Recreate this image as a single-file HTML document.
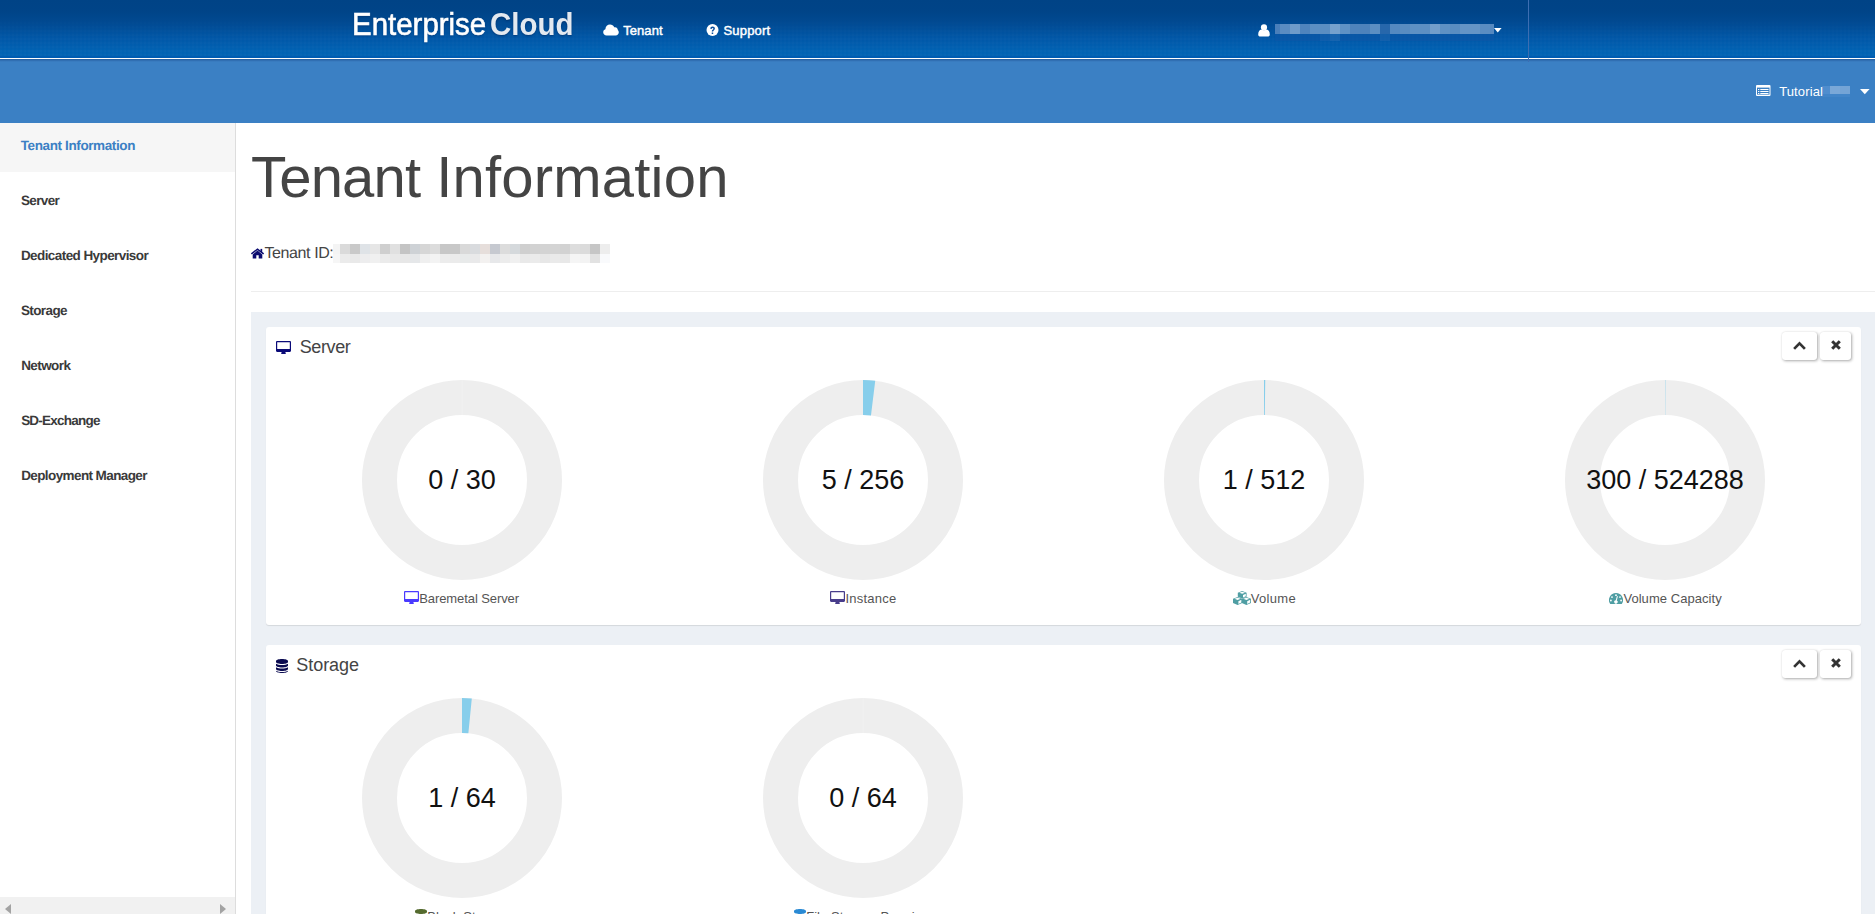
<!DOCTYPE html>
<html lang="en">
<head>
<meta charset="utf-8">
<title>Tenant Information</title>
<style>
*{box-sizing:border-box;margin:0;padding:0}
html,body{width:1875px;height:914px;overflow:hidden;background:#fff}
body{font-family:"Liberation Sans",sans-serif;color:#333;position:relative}
.abs{position:absolute}
.t{position:absolute;white-space:nowrap;line-height:1}
#top{position:absolute;left:0;top:0;width:1875px;height:58px;background:linear-gradient(#004386 0,#004488 12px,#00488f 20px,#004e99 28px,#0055a4 36px,#005cad 44px,#0062b3 51px,#0064b5 55px,#005db2 56.500px,#005bb0 58px)}
#top:after{content:"";position:absolute;left:0;top:14px;width:100%;height:42px;background-image:linear-gradient(90deg,rgba(255,255,255,.011) 50%,transparent 50%),linear-gradient(rgba(255,255,255,.011) 50%,transparent 50%);background-size:4px 4px;-webkit-mask-image:linear-gradient(transparent,#000 60%);mask-image:linear-gradient(transparent,#000 60%)}
#wl{position:absolute;left:0;top:58px;width:1875px;height:1px;background:#fff}
#sub{position:absolute;left:0;top:59px;width:1875px;height:64px;background:#3b80c4}
#sub:before{content:"";position:absolute;left:0;top:0;width:100%;height:3px;background:linear-gradient(#265f9f 0,#2c68aa 1px,#3676ba 2px,#3b80c4 3px)}
#vsep{position:absolute;left:1528px;top:0;width:1px;height:62px;background:#3d6eb2}
#side{position:absolute;left:0;top:123px;width:236px;height:791px;background:#fff;border-right:1px solid #ddd}
#side .act{position:absolute;left:0;top:0;width:235px;height:49px;background:#f6f6f6}
#side .it{position:absolute;font-size:13.500px;text-rendering:geometricPrecision;font-weight:bold;color:#3a3a3a;white-space:nowrap;line-height:16px}
#side .it.a{color:#3b80c4}
#sb{position:absolute;left:0;top:897px;width:235px;height:17px;background:#f1f1f1}
h1 span{position:absolute;top:0}
h1{position:absolute;font-size:58px;font-weight:normal;color:#444;line-height:64px;white-space:nowrap}
#hr{position:absolute;left:251px;top:291px;width:1624px;height:1px;background:#eee}
#wrap{position:absolute;left:251px;top:312px;width:1624px;height:602px;background:#ecf0f5}
.box{position:absolute;left:15px;width:1595px;height:298px;background:#fff;border-radius:3px;box-shadow:0 1px 1px rgba(0,0,0,.1)}
.bt{position:absolute;top:5px;height:28px;background:#fff;border-radius:3px;box-shadow:1px 1px 3px rgba(0,0,0,.33),0 0 1px rgba(0,0,0,.12)}
.ttl{position:absolute;font-size:18px;color:#444;line-height:20px;white-space:nowrap}
.dn{position:absolute;width:200px;height:200px;top:53px}
.dn text{font-family:"Liberation Sans",sans-serif;font-size:27px;fill:#111}
.lb{position:absolute;top:264px;font-size:13px;color:#555;line-height:16px;white-space:nowrap}
.lb svg{margin:-4px 0;vertical-align:3px}
</style>
</head>
<body>

<div id="top"></div>
<div id="wl"></div>
<div id="sub"></div>
<div id="vsep"></div>
<div class="t" id="logo" style="left:352px;top:7px;font-size:31px;line-height:36px;color:#fff;transform-origin:0 0;transform:scaleX(0.95);text-shadow:0 1px 2px rgba(0,30,80,.5)"><span style="-webkit-text-stroke:.6px #fff">Enterprise</span><span style="font-weight:bold;color:#e3e9f0;margin-left:4px">Cloud</span></div>
<svg class="abs" style="left:603px;top:24px" width="16" height="12" viewBox="0 0 16 12"><path fill="#fff" d="M3.600 11.400C1.700 11.400 .2 10 .2 8.200c0-1.400.9-2.600 2.200-3C2.500 2.600 4.500 .6 7 .6c1.900 0 3.500 1.100 4.200 2.700.3-.1.600-.15.900-.15 1.500 0 2.700 1.200 2.700 2.700v.2c.6.5 1 1.300 1 2.200 0 1.700-1.400 3.150-3.100 3.150z"/></svg>
<div class="t" id="nav1" style="left:623.17px;top:23px;font-size:13px;-webkit-text-stroke:.45px #fff;color:#fff;line-height:15px;letter-spacing:0.070px;">Tenant</div>
<svg class="abs" style="left:706px;top:24px" width="13" height="13" viewBox="0 0 13 13"><circle cx="6.500" cy="6.100" r="6" fill="#fff"/><path fill="#0a4f9e" d="M5.700 8.600h1.500v1.500H5.700zM4.300 4.700c0-1.300 1-2.100 2.300-2.100 1.300 0 2.300.8 2.300 2 0 .9-.5 1.400-1.100 1.800-.5.300-.6.500-.6 1.100H5.800c0-1 .3-1.400.9-1.800.5-.3.700-.6.700-1 0-.4-.3-.7-.8-.7s-.9.3-.9.900z"/></svg>
<div class="t" id="nav2" style="left:723.51px;top:23px;font-size:13px;-webkit-text-stroke:.45px #fff;color:#fff;line-height:15px;letter-spacing:0.174px;">Support</div>
<svg class="abs" style="left:1258px;top:24px" width="12" height="13" viewBox="0 0 12 13"><circle cx="6" cy="3.4" r="3.1" fill="#fff"/><path fill="#fff" d="M.2 10.400C.2 7.600 1.600 5.600 3.200 5.500c.8.500 1.700.8 2.800.8s2-.3 2.800-.8c1.600.1 3 2.100 3 4.900 0 1.300-.9 2.200-2.200 2.200H2.400C1.100 12.600.2 11.700.2 10.400z"/></svg>
<div id="umos" class="abs" style="left:1275px;top:24px;width:220px;height:17px"><i style="position:absolute;left:0px;top:0;width:5px;height:10px;background:#4a7fba"></i><i style="position:absolute;left:0px;top:10px;width:5px;height:7px;background:#0b57a7;opacity:.7"></i><i style="position:absolute;left:5px;top:0;width:10px;height:10px;background:#5a8cc2"></i><i style="position:absolute;left:5px;top:10px;width:10px;height:7px;background:#0b57a7;opacity:.7"></i><i style="position:absolute;left:15px;top:0;width:10px;height:10px;background:#6e9bca"></i><i style="position:absolute;left:15px;top:10px;width:10px;height:7px;background:#0b57a7;opacity:.7"></i><i style="position:absolute;left:25px;top:0;width:10px;height:10px;background:#4f84bd"></i><i style="position:absolute;left:25px;top:10px;width:10px;height:7px;background:#0b57a7;opacity:.7"></i><i style="position:absolute;left:35px;top:0;width:10px;height:10px;background:#5c8fc3"></i><i style="position:absolute;left:35px;top:10px;width:10px;height:7px;background:#0b57a7;opacity:.7"></i><i style="position:absolute;left:45px;top:0;width:10px;height:10px;background:#5b8ec2"></i><i style="position:absolute;left:45px;top:10px;width:10px;height:7px;background:#1560ac;opacity:.7"></i><i style="position:absolute;left:55px;top:0;width:10px;height:10px;background:#76a1cd"></i><i style="position:absolute;left:55px;top:10px;width:10px;height:7px;background:#1f68b0;opacity:.7"></i><i style="position:absolute;left:65px;top:0;width:10px;height:10px;background:#5f92c5"></i><i style="position:absolute;left:65px;top:10px;width:10px;height:7px;background:#0b57a7;opacity:.7"></i><i style="position:absolute;left:75px;top:0;width:10px;height:10px;background:#4e83bc"></i><i style="position:absolute;left:75px;top:10px;width:10px;height:7px;background:#0b57a7;opacity:.7"></i><i style="position:absolute;left:85px;top:0;width:10px;height:10px;background:#4d82bb"></i><i style="position:absolute;left:85px;top:10px;width:10px;height:7px;background:#0b57a7;opacity:.7"></i><i style="position:absolute;left:95px;top:0;width:10px;height:10px;background:#5b8ec2"></i><i style="position:absolute;left:95px;top:10px;width:10px;height:7px;background:#0b57a7;opacity:.7"></i><i style="position:absolute;left:105px;top:0;width:10px;height:10px;background:#2767ab"></i><i style="position:absolute;left:105px;top:10px;width:10px;height:7px;background:#1a62ad;opacity:.7"></i><i style="position:absolute;left:115px;top:0;width:10px;height:10px;background:#5589c0"></i><i style="position:absolute;left:115px;top:10px;width:10px;height:7px;background:#0b57a7;opacity:.7"></i><i style="position:absolute;left:125px;top:0;width:10px;height:10px;background:#588cc1"></i><i style="position:absolute;left:125px;top:10px;width:10px;height:7px;background:#0b57a7;opacity:.7"></i><i style="position:absolute;left:135px;top:0;width:10px;height:10px;background:#5e91c4"></i><i style="position:absolute;left:135px;top:10px;width:10px;height:7px;background:#0b57a7;opacity:.7"></i><i style="position:absolute;left:145px;top:0;width:10px;height:10px;background:#5c8fc3"></i><i style="position:absolute;left:145px;top:10px;width:10px;height:7px;background:#0b57a7;opacity:.7"></i><i style="position:absolute;left:155px;top:0;width:10px;height:10px;background:#729ecb"></i><i style="position:absolute;left:155px;top:10px;width:10px;height:7px;background:#0b57a7;opacity:.7"></i><i style="position:absolute;left:165px;top:0;width:10px;height:10px;background:#5e91c4"></i><i style="position:absolute;left:165px;top:10px;width:10px;height:7px;background:#0b57a7;opacity:.7"></i><i style="position:absolute;left:175px;top:0;width:10px;height:10px;background:#598dc1"></i><i style="position:absolute;left:175px;top:10px;width:10px;height:7px;background:#0b57a7;opacity:.7"></i><i style="position:absolute;left:185px;top:0;width:10px;height:10px;background:#6494c6"></i><i style="position:absolute;left:185px;top:10px;width:10px;height:7px;background:#0b57a7;opacity:.7"></i><i style="position:absolute;left:195px;top:0;width:10px;height:10px;background:#6595c6"></i><i style="position:absolute;left:195px;top:10px;width:10px;height:7px;background:#0b57a7;opacity:.7"></i><i style="position:absolute;left:205px;top:0;width:10px;height:10px;background:#5a8dc2"></i><i style="position:absolute;left:205px;top:10px;width:10px;height:7px;background:#0b57a7;opacity:.7"></i><i style="position:absolute;left:215px;top:0;width:4px;height:10px;background:#5589c0"></i><i style="position:absolute;left:215px;top:10px;width:4px;height:7px;background:#0b57a7;opacity:.7"></i></div>
<svg class="abs" style="left:1494px;top:28px" width="8" height="5" viewBox="0 0 8 5"><path fill="#fff" d="M0 0h7.600L3.800 4.600z"/></svg>
<svg class="abs" style="left:1756px;top:85px" width="15" height="11" viewBox="0 0 15 11"><rect x="0" y="0" width="14.500" height="11" rx="1" fill="#fff"/><rect x="1" y="2.600" width="12.500" height="7" fill="#3b80c4"/><path fill="#fff" d="M2 4h1.300v1H2zM4.300 4h8.200v1H4.300zM2 6h1.300v1H2zM4.300 6h8.200v1H4.300zM2 8h1.300v1H2zM4.300 8h8.200v1H4.300z"/></svg>
<div id="tmos" class="abs" style="left:1822px;top:86px;width:28px;height:11px"><i style="position:absolute;left:0;top:0;width:8px;height:8px;background:#4f8dce"></i><i style="position:absolute;left:8px;top:0;width:10px;height:8px;background:#7aa8d8"></i><i style="position:absolute;left:18px;top:0;width:10px;height:8px;background:#74a4d6"></i><i style="position:absolute;left:0;top:8px;width:28px;height:3px;background:#4285c8"></i></div>
<div class="t" id="tut" style="left:1779.15px;top:84px;font-size:13px;color:#fff;line-height:15px;letter-spacing:0.139px;">Tutorial</div>
<svg class="abs" style="left:1860px;top:89px" width="10" height="6" viewBox="0 0 10 6"><path fill="#fff" d="M0 0h9.600L4.800 5.200z"/></svg>

<div id="side"><div class="act"></div><div class="it a" id="s0" style="left:20.78px;top:15.3px;letter-spacing:-0.388px;">Tenant Information</div><div class="it" id="s1" style="left:20.88px;top:70.3px;letter-spacing:-0.617px;">Server</div><div class="it" id="s2" style="left:20.95px;top:125.3px;letter-spacing:-0.580px;">Dedicated Hypervisor</div><div class="it" id="s3" style="left:20.88px;top:180.3px;letter-spacing:-0.601px;">Storage</div><div class="it" id="s4" style="left:21.15px;top:235.3px;letter-spacing:-0.585px;">Network</div><div class="it" id="s5" style="left:21.13px;top:290.3px;letter-spacing:-0.764px;">SD-Exchange</div><div class="it" id="s6" style="left:21.15px;top:345.3px;letter-spacing:-0.598px;">Deployment Manager</div></div><div id="sb"><svg class="abs" style="left:5px;top:7px" width="6" height="10" viewBox="0 0 6 10"><path fill="#a3a3a3" d="M6 0v10L0 5z"/></svg><svg class="abs" style="left:220px;top:7px" width="6" height="10" viewBox="0 0 6 10"><path fill="#a3a3a3" d="M0 0v10l6-5z"/></svg></div>

<h1 style="left:0;top:145px;width:800px;height:64px"><span id="h1a" style="left:251.0px;letter-spacing:-0.805px;">Tenant</span> <span id="h1b" style="left:436.15px;letter-spacing:0.215px;">Information</span></h1>
<svg class="abs" id="home" style="left:251px;top:247.500px" width="13" height="11" viewBox="0 0 13 11"><path fill="#0b0b70" d="M6.500 2.600 11.300 6.500V10.500H7.700V7.300H5.300V10.500H1.700V6.500z"/><path fill="none" stroke="#0b0b70" stroke-width="1.500" d="M.4 6 6.500 1.100 12.600 6"/><rect x="9.500" y=".9" width="1.700" height="3.200" fill="#0b0b70"/></svg>
<div class="t" id="tid" style="left:264.48px;top:245px;font-size:16px;text-rendering:geometricPrecision;color:#444;line-height:17px;letter-spacing:-0.398px;">Tenant ID:</div>
<div id="idmos" class="abs" style="left:333px;top:244px;width:277px;height:19px"><i style="position:absolute;left:0px;top:0;width:7px;height:10px;background:#f4f4f4"></i><i style="position:absolute;left:0px;top:10px;width:7px;height:9px;background:#f6f6f6"></i><i style="position:absolute;left:7px;top:0;width:10px;height:10px;background:#dadada"></i><i style="position:absolute;left:7px;top:10px;width:10px;height:9px;background:#ebebeb"></i><i style="position:absolute;left:17px;top:0;width:10px;height:10px;background:#c9c9c9"></i><i style="position:absolute;left:17px;top:10px;width:10px;height:9px;background:#e9e9e9"></i><i style="position:absolute;left:27px;top:0;width:10px;height:10px;background:#dfe3e7"></i><i style="position:absolute;left:27px;top:10px;width:10px;height:9px;background:#ededee"></i><i style="position:absolute;left:37px;top:0;width:10px;height:10px;background:#e6e6e6"></i><i style="position:absolute;left:37px;top:10px;width:10px;height:9px;background:#f0f0f0"></i><i style="position:absolute;left:47px;top:0;width:10px;height:10px;background:#cfcfcf"></i><i style="position:absolute;left:47px;top:10px;width:10px;height:9px;background:#ebebeb"></i><i style="position:absolute;left:57px;top:0;width:10px;height:10px;background:#e0e0e0"></i><i style="position:absolute;left:57px;top:10px;width:10px;height:9px;background:#e8e8e8"></i><i style="position:absolute;left:67px;top:0;width:10px;height:10px;background:#c4c4c4"></i><i style="position:absolute;left:67px;top:10px;width:10px;height:9px;background:#e7e7e7"></i><i style="position:absolute;left:77px;top:0;width:10px;height:10px;background:#ced2d6"></i><i style="position:absolute;left:77px;top:10px;width:10px;height:9px;background:#e5e7e9"></i><i style="position:absolute;left:87px;top:0;width:10px;height:10px;background:#d6d6d6"></i><i style="position:absolute;left:87px;top:10px;width:10px;height:9px;background:#efefef"></i><i style="position:absolute;left:97px;top:0;width:10px;height:10px;background:#dcdcdc"></i><i style="position:absolute;left:97px;top:10px;width:10px;height:9px;background:#f3f3f3"></i><i style="position:absolute;left:107px;top:0;width:10px;height:10px;background:#c7c7c7"></i><i style="position:absolute;left:107px;top:10px;width:10px;height:9px;background:#ececec"></i><i style="position:absolute;left:117px;top:0;width:10px;height:10px;background:#c8c8c8"></i><i style="position:absolute;left:117px;top:10px;width:10px;height:9px;background:#ebebeb"></i><i style="position:absolute;left:127px;top:0;width:10px;height:10px;background:#d9d9d9"></i><i style="position:absolute;left:127px;top:10px;width:10px;height:9px;background:#e8eaea"></i><i style="position:absolute;left:137px;top:0;width:10px;height:10px;background:#d9dbde"></i><i style="position:absolute;left:137px;top:10px;width:10px;height:9px;background:#e9e9ea"></i><i style="position:absolute;left:147px;top:0;width:10px;height:10px;background:#e6dedb"></i><i style="position:absolute;left:147px;top:10px;width:10px;height:9px;background:#f3f1f0"></i><i style="position:absolute;left:157px;top:0;width:10px;height:10px;background:#c6c9d0"></i><i style="position:absolute;left:157px;top:10px;width:10px;height:9px;background:#e7e8ea"></i><i style="position:absolute;left:167px;top:0;width:10px;height:10px;background:#dcdcdc"></i><i style="position:absolute;left:167px;top:10px;width:10px;height:9px;background:#ececec"></i><i style="position:absolute;left:177px;top:0;width:10px;height:10px;background:#d5d9dc"></i><i style="position:absolute;left:177px;top:10px;width:10px;height:9px;background:#f0f0f0"></i><i style="position:absolute;left:187px;top:0;width:10px;height:10px;background:#cfcfcf"></i><i style="position:absolute;left:187px;top:10px;width:10px;height:9px;background:#e9e9e9"></i><i style="position:absolute;left:197px;top:0;width:10px;height:10px;background:#d2d2d2"></i><i style="position:absolute;left:197px;top:10px;width:10px;height:9px;background:#ebebeb"></i><i style="position:absolute;left:207px;top:0;width:10px;height:10px;background:#d3d3d3"></i><i style="position:absolute;left:207px;top:10px;width:10px;height:9px;background:#e7e7e7"></i><i style="position:absolute;left:217px;top:0;width:10px;height:10px;background:#d4d4d4"></i><i style="position:absolute;left:217px;top:10px;width:10px;height:9px;background:#eaeaea"></i><i style="position:absolute;left:227px;top:0;width:10px;height:10px;background:#d2d2d2"></i><i style="position:absolute;left:227px;top:10px;width:10px;height:9px;background:#e8e8e8"></i><i style="position:absolute;left:237px;top:0;width:10px;height:10px;background:#dddddd"></i><i style="position:absolute;left:237px;top:10px;width:10px;height:9px;background:#f5f5f5"></i><i style="position:absolute;left:247px;top:0;width:10px;height:10px;background:#dbdbdb"></i><i style="position:absolute;left:247px;top:10px;width:10px;height:9px;background:#f3f3f3"></i><i style="position:absolute;left:257px;top:0;width:10px;height:10px;background:#c6c6c6"></i><i style="position:absolute;left:257px;top:10px;width:10px;height:9px;background:#e2e2e2"></i><i style="position:absolute;left:267px;top:0;width:10px;height:10px;background:#ededed"></i><i style="position:absolute;left:267px;top:10px;width:10px;height:9px;background:#f9fafc"></i></div>
<div id="hr"></div>

<div id="wrap"><div class="box" id="b1" style="top:15px"><div class="abs" style="left:10px;top:13px"><svg width="15" height="13" viewBox="0 0 15 13"><path fill="#0a0a78" d="M1.200 0h12.600c.7 0 1.200.5 1.200 1.200v8.600c0 .7-.5 1.200-1.200 1.200H9.300l.5 1.300c.1.300 0 .7-.4.700H5.600c-.4 0-.5-.4-.4-.7l.5-1.300H1.200C.5 11 0 10.500 0 9.800V1.200C0 .5.500 0 1.200 0zm0 1.200v6.900h12.600V1.200z"/></svg></div><div class="ttl" id="ttl1" style="left:33.69px;top:10px;letter-spacing:-0.372px;">Server</div><div class="bt" style="left:1516px;width:35px"><svg class="abs" style="left:11px;top:8.8px" width="13" height="9" viewBox="0 0 13 9"><path fill="none" stroke="#333" stroke-width="2.7" d="M1.100 7.900 6.500 2.400 11.900 7.900"/></svg></div>
<div class="bt" style="left:1554px;width:31px"><svg class="abs" style="left:10.5px;top:8.3px" width="10" height="10" viewBox="0 0 10 10"><path fill="none" stroke="#333" stroke-width="3" d="M1.200 1.200l7.600 7.600M8.800 1.200l-7.600 7.600"/></svg></div><svg class="dn" style="left:95.8px" width="200" height="200" viewBox="0 0 200 200"><circle cx="100" cy="100" r="82.500" fill="none" stroke="#eee" stroke-width="35"/><path d="M100 0v35" stroke="#f1f1f1" stroke-width="1"/><text x="100" y="108.700" text-anchor="middle">0 / 30</text></svg><div class="lb" id="lb1" style="left:138.24px;letter-spacing:-0.086px;"><svg width="15" height="13" viewBox="0 0 15 13"><path fill="#4a3aff" d="M1.200 0h12.600c.7 0 1.200.5 1.200 1.200v8.600c0 .7-.5 1.200-1.200 1.200H9.300l.5 1.300c.1.300 0 .7-.4.700H5.600c-.4 0-.5-.4-.4-.7l.5-1.300H1.200C.5 11 0 10.500 0 9.800V1.200C0 .5.500 0 1.200 0zm0 1.200v6.900h12.600V1.200z"/></svg>Baremetal Server</div><svg class="dn" style="left:496.9px" width="200" height="200" viewBox="0 0 200 200"><circle cx="100" cy="100" r="82.500" fill="none" stroke="#eee" stroke-width="35"/><path fill="#87ceeb" d="M100 0A100 100 0 0 1 112.24 0.75L107.96 35.49A65 65 0 0 0 100 35z"/><text x="100" y="108.700" text-anchor="middle">5 / 256</text></svg><div class="lb" id="lb2" style="left:564.42px;letter-spacing:0.230px;"><svg width="15" height="13" viewBox="0 0 15 13"><path fill="#483d8b" d="M1.200 0h12.600c.7 0 1.200.5 1.200 1.200v8.600c0 .7-.5 1.200-1.200 1.200H9.300l.5 1.300c.1.300 0 .7-.4.700H5.600c-.4 0-.5-.4-.4-.7l.5-1.300H1.200C.5 11 0 10.500 0 9.800V1.200C0 .5.500 0 1.200 0zm0 1.200v6.900h12.600V1.200z"/></svg>Instance</div><svg class="dn" style="left:898.0px" width="200" height="200" viewBox="0 0 200 200"><circle cx="100" cy="100" r="82.500" fill="none" stroke="#eee" stroke-width="35"/><path fill="#87ceeb" d="M100 0A100 100 0 0 1 101.23 0.01L100.80 35.00A65 65 0 0 0 100 35z"/><text x="100" y="108.700" text-anchor="middle">1 / 512</text></svg><div class="lb" id="lb3" style="left:966.73px;letter-spacing:0.308px;"><svg style="vertical-align:2px" width="18" height="14" viewBox="0 0 18 14"><path fill="#4f9ea3" d="M9.20 0.00L13.60 1.67L13.60 5.78L9.20 7.60L4.80 5.78L4.80 1.67z"/><path fill="#fff" d="M9.20 0.75L12.10 1.67L9.20 2.82L6.30 1.67zM10.00 4.07L12.80 2.67L12.80 5.28L10.00 6.60z"/><path fill="#4f9ea3" d="M4.60 6.00L9.20 7.76L9.20 12.08L4.60 14.00L0.00 12.08L0.00 7.76z"/><path fill="#fff" d="M4.60 6.75L7.70 7.76L4.60 9.01L1.50 7.76zM5.40 10.26L8.40 8.76L8.40 11.58L5.40 13.00z"/><path fill="#4f9ea3" d="M13.40 6.00L18.00 7.76L18.00 12.08L13.40 14.00L8.80 12.08L8.80 7.76z"/><path fill="#fff" d="M13.40 6.75L16.50 7.76L13.40 9.01L10.30 7.76zM14.20 10.26L17.20 8.76L17.20 11.58L14.20 13.00z"/></svg>Volume</div><svg class="dn" style="left:1299.0px" width="200" height="200" viewBox="0 0 200 200"><circle cx="100" cy="100" r="82.500" fill="none" stroke="#eee" stroke-width="35"/><path fill="#87ceeb" d="M100 0A100 100 0 0 1 100.36 0.00L100.23 35.00A65 65 0 0 0 100 35z"/><text x="100" y="108.700" text-anchor="middle">300 / 524288</text></svg><div class="lb" id="lb4" style="left:1343.39px;letter-spacing:0.053px;"><svg style="vertical-align:3px" width="14" height="11.500" viewBox="0 0 14 11.500"><path fill="#4f9ea3" d="M7 0a7 7 0 0 1 5.900 10.800c-.2.300-.5.500-.9.500H2c-.4 0-.7-.2-.9-.5A7 7 0 0 1 7 0zm0 1.300a.9.900 0 1 0 0 1.800.9.900 0 0 0 0-1.800zM3 3.200a.9.900 0 1 0 0 1.800.9.900 0 0 0 0-1.800zm8 0a.9.900 0 1 0 0 1.800.9.900 0 0 0 0-1.800zM1.900 6.600a.9.900 0 1 0 0 1.800.9.900 0 0 0 0-1.800zm10.200 0a.9.900 0 1 0 0 1.800.9.900 0 0 0 0-1.800zM8.9 3.3l-.95-.25-1.2 4.1a1.7 1.7 0 1 0 1.05.25z"/></svg>Volume Capacity</div></div><div class="box" id="b2" style="top:333px"><div class="abs" style="left:10px;top:14px"><svg style="vertical-align:2px" width="12" height="14" viewBox="0 0 12 14"><path fill="#0a0a50" d="M6 0c3.300 0 6 .9 6 2v1c0 1.100-2.700 2-6 2s-6-.9-6-2V2c0-1.100 2.700-2 6-2zM0 4.700C1.200 5.600 3.600 6 6 6s4.800-.4 6-1.300V6.500c0 1.100-2.700 2-6 2s-6-.9-6-2zM0 8.200c1.200.9 3.600 1.300 6 1.300s4.800-.4 6-1.300V10c0 1.100-2.700 2-6 2s-6-.9-6-2zM0 11.700c1.200.9 3.600 1.300 6 1.300s4.800-.4 6-1.300V12c0 1.100-2.700 2-6 2s-6-.9-6-2z"/></svg></div><div class="ttl" id="ttl2" style="left:30.29px;top:10px;letter-spacing:-0.053px;">Storage</div><div class="bt" style="left:1516px;width:35px"><svg class="abs" style="left:11px;top:8.8px" width="13" height="9" viewBox="0 0 13 9"><path fill="none" stroke="#333" stroke-width="2.7" d="M1.100 7.900 6.500 2.400 11.900 7.900"/></svg></div>
<div class="bt" style="left:1554px;width:31px"><svg class="abs" style="left:10.5px;top:8.3px" width="10" height="10" viewBox="0 0 10 10"><path fill="none" stroke="#333" stroke-width="3" d="M1.200 1.200l7.600 7.600M8.800 1.200l-7.600 7.600"/></svg></div><svg class="dn" style="left:95.8px" width="200" height="200" viewBox="0 0 200 200"><circle cx="100" cy="100" r="82.500" fill="none" stroke="#eee" stroke-width="35"/><path fill="#87ceeb" d="M100 0A100 100 0 0 1 109.80 0.48L106.37 35.31A65 65 0 0 0 100 35z"/><text x="100" y="108.700" text-anchor="middle">1 / 64</text></svg><div class="lb" id="lb5" style="left:149.2px;letter-spacing:0.095px;"><svg style="vertical-align:2px" width="12" height="14" viewBox="0 0 12 14"><path fill="#556b2f" d="M6 0c3.300 0 6 .9 6 2v1c0 1.100-2.700 2-6 2s-6-.9-6-2V2c0-1.100 2.700-2 6-2zM0 4.700C1.200 5.600 3.600 6 6 6s4.800-.4 6-1.300V6.500c0 1.100-2.700 2-6 2s-6-.9-6-2zM0 8.200c1.200.9 3.600 1.300 6 1.300s4.800-.4 6-1.300V10c0 1.100-2.700 2-6 2s-6-.9-6-2zM0 11.700c1.200.9 3.600 1.300 6 1.300s4.800-.4 6-1.300V12c0 1.100-2.700 2-6 2s-6-.9-6-2z"/></svg>Block Storage</div><svg class="dn" style="left:496.9px" width="200" height="200" viewBox="0 0 200 200"><circle cx="100" cy="100" r="82.500" fill="none" stroke="#eee" stroke-width="35"/><path d="M100 0v35" stroke="#f1f1f1" stroke-width="1"/><text x="100" y="108.700" text-anchor="middle">0 / 64</text></svg><div class="lb" id="lb6" style="left:528.18px;letter-spacing:0.051px;"><svg style="vertical-align:2px" width="12" height="14" viewBox="0 0 12 14"><path fill="#2a8ad4" d="M6 0c3.300 0 6 .9 6 2v1c0 1.100-2.700 2-6 2s-6-.9-6-2V2c0-1.100 2.700-2 6-2zM0 4.700C1.200 5.600 3.600 6 6 6s4.800-.4 6-1.300V6.500c0 1.100-2.700 2-6 2s-6-.9-6-2zM0 8.200c1.200.9 3.600 1.300 6 1.300s4.800-.4 6-1.300V10c0 1.100-2.700 2-6 2s-6-.9-6-2zM0 11.700c1.200.9 3.600 1.300 6 1.300s4.800-.4 6-1.300V12c0 1.100-2.700 2-6 2s-6-.9-6-2z"/></svg>File Storage Premium</div></div></div>
</body>
</html>
